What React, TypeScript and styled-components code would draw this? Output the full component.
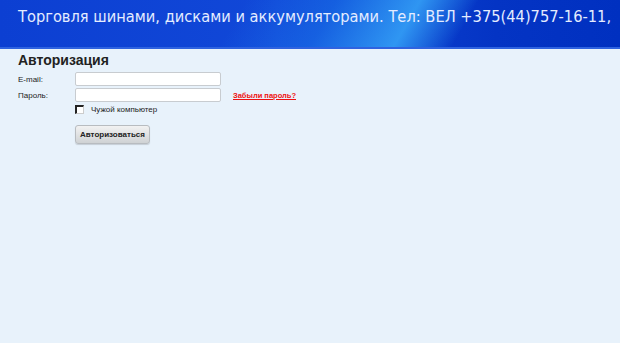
import styled, { createGlobalStyle } from "styled-components";

const Global = createGlobalStyle`
  html, body {
    margin: 0;
    padding: 0;
    background: #e8f2fb;
  }
  body {
    font-family: "Liberation Sans", Arial, sans-serif;
  }
`;

const Header = styled.div`
  height: 49px;
  border-bottom: 2px solid #2f63e0;
  background:
    linear-gradient(120deg, rgba(0,60,220,0) 0%, rgba(0,60,220,0) 38%, rgba(30,130,240,0.45) 52%, rgba(60,180,255,0.75) 65%, rgba(0,50,200,0) 74%),
    linear-gradient(90deg, #0c3fd2 0%, #1148d8 45%, #0434c4 80%, #0030c0 100%);
  color: #e4ecff;
  font-family: "DejaVu Sans Condensed", "DejaVu Sans", sans-serif;
  font-stretch: condensed;
  font-size: 16.3px;
  line-height: 22px;
  padding: 6px 0 0 18px;
  box-sizing: border-box;
  white-space: nowrap;
  overflow: hidden;
`;

const Main = styled.div`
  padding: 2px 18px;
`;

const Title = styled.h2`
  margin: 0 0 3px;
  font-size: 14px;
  font-weight: bold;
  color: #222;
  line-height: 18px;
`;

const Form = styled.div`
  display: grid;
  grid-template-columns: 57px 146px auto;
  row-gap: 2px;
  align-items: center;
  font-size: 8px;
  color: #222;
`;

const Label = styled.label`
  font-size: 8px;
`;

const Input = styled.input`
  width: 146px;
  height: 14px;
  box-sizing: border-box;
  border: 1px solid #c8ccd0;
  border-radius: 2px;
  background: #fff;
  margin: 0;
  padding: 0 3px;
  font-size: 8px;
`;

const Forgot = styled.a`
  margin-left: 12px;
  color: #ee1111;
  font-weight: bold;
  font-size: 7.5px;
  text-decoration: underline;
`;

const CheckRow = styled.div`
  grid-column: 2 / 4;
  display: flex;
  align-items: center;
  gap: 7px;
  margin-top: 1px;
  font-size: 8px;
`;

const Box = styled.span`
  width: 6px;
  height: 6px;
  border-top: 2px solid #222;
  border-left: 2px solid #222;
  border-right: 1px solid #ccc;
  border-bottom: 1px solid #ccc;
  background: #fff;
`;

const Button = styled.button`
  grid-column: 2 / 4;
  justify-self: start;
  margin-top: 9px;
  width: 75px;
  height: 19px;
  border: 1px solid #b8bcc0;
  border-radius: 3px;
  background: linear-gradient(#f2f2f2, #cfd2d4);
  box-shadow: 0 1px 1px rgba(0,0,0,0.15);
  font-family: "Liberation Sans", Arial, sans-serif;
  font-size: 8px;
  font-weight: bold;
  color: #222;
  padding: 0;
`;

export default function App() {
  return (
    <>
      <Global />
      <Header>Торговля шинами, дисками и аккумуляторами. Тел: ВЕЛ +375(44)757-16-11,</Header>
      <Main>
        <Title>Авторизация</Title>
        <Form>
          <Label>E-mail:</Label>
          <Input type="text" />
          <span />
          <Label>Пароль:</Label>
          <Input type="password" />
          <Forgot href="#">Забыли пароль?</Forgot>
          <CheckRow>
            <Box />
            <span>Чужой компьютер</span>
          </CheckRow>
          <Button>Авторизоваться</Button>
        </Form>
      </Main>
    </>
  );
}
